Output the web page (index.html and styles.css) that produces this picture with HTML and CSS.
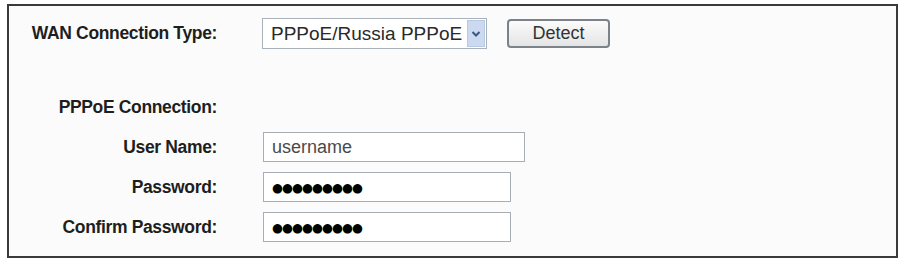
FILE: index.html
```html
<!DOCTYPE html>
<html>
<head>
<meta charset="utf-8">
<link rel="stylesheet" href="styles.css">
</head>
<body>
<div class="frame">
  <div class="row row-wan">
    <div class="label">WAN Connection Type:</div>
    <div class="field">
      <div class="select">
        <span class="select-text">PPPoE/Russia PPPoE</span>
        <span class="select-arrow"><svg width="10" height="8" viewBox="0 0 10 8"><path d="M1.5 2 L5 5.5 L8.5 2" fill="none" stroke="#3d5680" stroke-width="2"/></svg></span>
      </div>
      <button class="btn">Detect</button>
    </div>
  </div>
  <div class="row row-section">
    <div class="label">PPPoE Connection:</div>
  </div>
  <div class="row">
    <div class="label">User Name:</div>
    <div class="field"><div class="input input-wide">username</div></div>
  </div>
  <div class="row">
    <div class="label">Password:</div>
    <div class="field"><div class="input input-pass"><span class="dots">●●●●●●●●●</span></div></div>
  </div>
  <div class="row">
    <div class="label">Confirm Password:</div>
    <div class="field"><div class="input input-pass"><span class="dots">●●●●●●●●●</span></div></div>
  </div>
</div>
</body>
</html>
```
FILE: styles.css
```css
html, body {
  margin: 0;
  padding: 0;
  background: #ffffff;
}
body {
  padding: 4px 0 0 7px;
  font-family: "Liberation Sans", Arial, sans-serif;
}
.frame {
  box-sizing: border-box;
  width: 891px;
  height: 254px;
  border: 2px solid #3a3a3a;
  background: #fbfbfb;
  padding-top: 12px;
  display: flex;
  flex-direction: column;
  gap: 10px;
}
.row {
  display: flex;
  align-items: center;
  height: 30px;
}
.row-wan {
  height: 31px;
  margin-bottom: 33px;
}
.label {
  width: 208px;
  margin-right: 46px;
  text-align: right;
  font-weight: bold;
  font-size: 17.5px;
  letter-spacing: -0.35px;
  color: #1e1e1e;
  flex: none;
}
.field {
  display: flex;
  align-items: center;
  gap: 20px;
}
.row-wan .field {
  margin-left: -1px;
}
.select {
  box-sizing: border-box;
  width: 225px;
  height: 31px;
  border: 1px solid #a9b1ba;
  background: #fff;
  display: flex;
  align-items: center;
  justify-content: space-between;
  padding: 1px 1px 1px 8px;
}
.select-text {
  font-size: 19px;
  color: #2a2a2a;
}
.select-arrow {
  width: 18px;
  align-self: stretch;
  background: #cbdaf0;
  border: 1px solid #b9c9e3;
  box-sizing: border-box;
  display: flex;
  align-items: center;
  justify-content: center;
}
.btn {
  box-sizing: border-box;
  width: 103px;
  height: 29px;
  border: 2px solid #7c828a;
  border-radius: 4px;
  background: linear-gradient(#fbfbfb, #e4e4e4);
  font-family: "Liberation Sans", Arial, sans-serif;
  font-size: 18px;
  color: #333;
  padding: 0;
}
.input {
  box-sizing: border-box;
  height: 30px;
  border: 1px solid #a7aeb6;
  background: #fff;
  padding-left: 8px;
  display: flex;
  align-items: center;
  font-size: 18px;
  color: #4a4a4a;
}
.input-wide {
  width: 262px;
}
.input-pass {
  width: 248px;
}
.dots {
  font-family: "DejaVu Sans", sans-serif;
  font-size: 12.5px;
  color: #000;
  letter-spacing: -0.9px;
}
```
